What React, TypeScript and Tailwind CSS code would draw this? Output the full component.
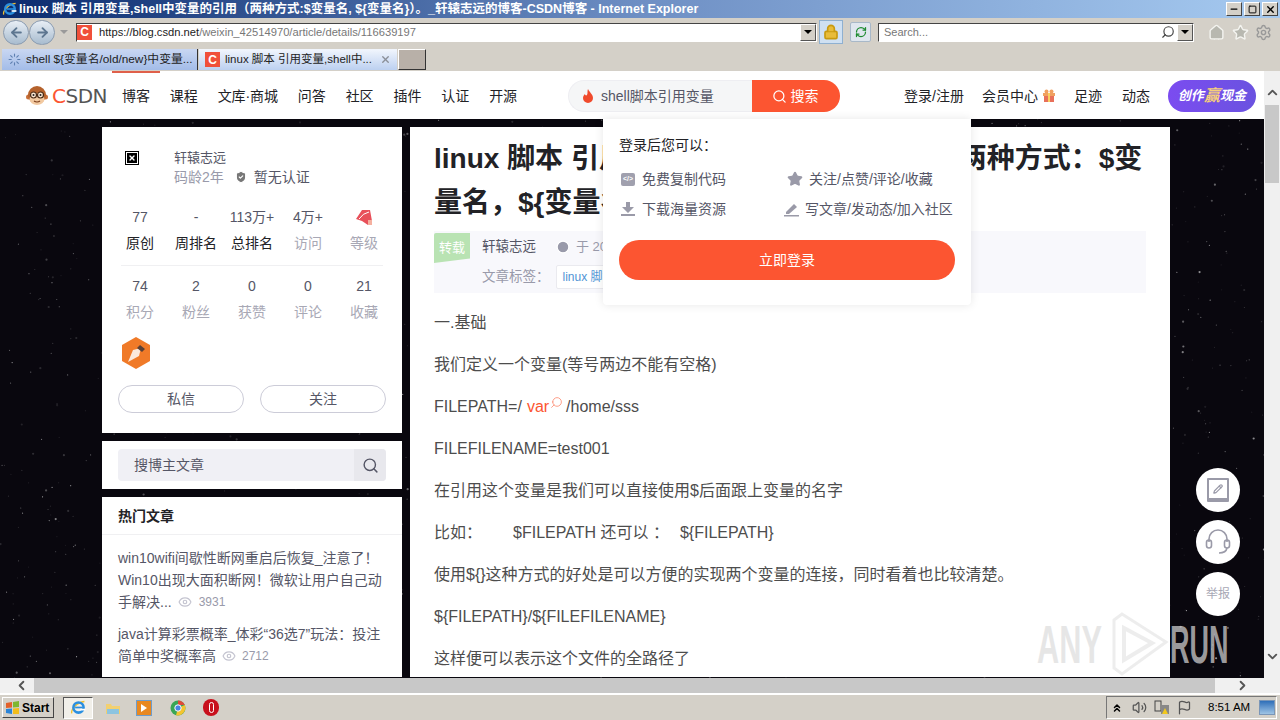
import { ArrowLeft, ArrowRight, ChevronDown, ChevronLeft, ChevronRight, ChevronUp, ChevronsUp, Eye, Home, Lock, Minus, Pencil, RefreshCw, Search, Settings, Star, X, Square, Volume2, Flag, Clock, ShieldCheck, Loader } from 'lucide-react'

const NAV_LEFT = ['博客', '课程', '文库·商城', '问答', '社区', '插件', '认证', '开源']

const STATS = [
  [
    { n: '77', l: '原创', dark: true },
    { n: '-', l: '周排名', dark: true },
    { n: '113万+', l: '总排名', dark: true },
    { n: '4万+', l: '访问', dark: false },
    { n: '', l: '等级', dark: false },
  ],
  [
    { n: '74', l: '积分', dark: false },
    { n: '2', l: '粉丝', dark: false },
    { n: '0', l: '获赞', dark: false },
    { n: '0', l: '评论', dark: false },
    { n: '21', l: '收藏', dark: false },
  ],
]

// 背景星点，固定种子保证每次一样
function makeStars(count: number) {
  const out: { x: number; y: number; r: number; o: number }[] = []
  let s = 1337
  const rnd = () => {
    s = (s * 16807) % 2147483647
    return s / 2147483647
  }
  for (let i = 0; i < count; i++) {
    out.push({ x: rnd() * 1264, y: rnd() * 560, r: rnd() < 0.2 ? 1.1 : 0.6, o: 0.08 + rnd() * rnd() * 0.6 })
  }
  return out
}
const STARS = makeStars(1700)

function CaretButton() {
  return (
    <div className="flex h-[17px] w-[16px] items-center justify-center border border-t-white border-l-white border-r-[#555] border-b-[#555] bg-[#d4d0c8]">
      <div className="h-0 w-0 border-x-[4px] border-t-[4px] border-x-transparent border-t-black" />
    </div>
  )
}

function FaviconC({ size = 19 }: { size?: number }) {
  return (
    <div
      className="flex shrink-0 items-center justify-center bg-[#f0503a] font-bold leading-none text-white"
      style={{ width: size, height: size, fontSize: size - 3 }}
    >
      C
    </div>
  )
}

function IeLogo({ size = 18 }: { size?: number }) {
  return (
    <svg width={size} height={size} viewBox="0 0 20 20">
      <path d="M2 17 C1 12 8 4 17 3" fill="none" stroke="#f0c030" strokeWidth="1.6" />
      <circle cx="10" cy="10" r="6" fill="none" stroke="#2a8fe0" strokeWidth="3" />
      <rect x="6" y="9" width="9" height="2" fill="#2a8fe0" />
      <rect x="12" y="11.5" width="6" height="2" fill="#fff" />
    </svg>
  )
}

function TitleBar() {
  return (
    <div className="flex h-[18px] shrink-0 items-center bg-gradient-to-r from-[#0a2a6e] via-[#6e8fc4] to-[#a6caf0] pr-[2px]">
      <div className="ml-[2px] mr-[1px]">
        <IeLogo size={16} />
      </div>
      <span className="whitespace-nowrap text-[12.5px] font-bold leading-none text-white">
        linux 脚本 引用变量,shell中变量的引用（两种方式:$变量名, ${'{'}变量名{'}'}）。_轩辕志远的博客-CSDN博客 - Internet Explorer
      </span>
      <div className="ml-auto flex gap-[2px]">
        {[
          <Minus key="m" size={10} strokeWidth={3} />,
          <Square key="s" size={9} strokeWidth={2.5} />,
          <X key="x" size={11} strokeWidth={3} />,
        ].map(icon => (
          <div key={icon.key} className="flex h-[14px] w-[16px] items-center justify-center border border-t-white border-l-white border-r-[#444] border-b-[#444] bg-[#d4d0c8] text-black">
            {icon}
          </div>
        ))}
      </div>
    </div>
  )
}

function AddressRow() {
  return (
    <div className="flex h-[30px] shrink-0 items-center bg-[#d4d0c8] pb-[2px] pl-[3px]">
      <div className="flex h-[25px] w-[26px] items-center justify-center rounded-full border border-[#8a9bb0] bg-gradient-to-b from-[#e8eef5] to-[#a8bccf]">
        <ArrowLeft size={15} strokeWidth={3} className="text-[#5d7690]" />
      </div>
      <div className="flex h-[25px] w-[26px] items-center justify-center rounded-full border border-[#8a9bb0] bg-gradient-to-b from-[#e8eef5] to-[#a8bccf]">
        <ArrowRight size={15} strokeWidth={3} className="text-[#5d7690]" />
      </div>
      <div className="ml-[5px] h-0 w-0 border-x-[4px] border-t-[4px] border-x-transparent border-t-[#9a9a9a]" />
      <div className="ml-[8px] flex h-[19px] w-[741px] items-center border border-t-[#444] border-l-[#444] border-r-white border-b-white bg-white">
        <FaviconC size={15} />
        <span className="ml-[7px] text-[11.2px] text-[#777]">
          <span className="text-[#222]">https://</span>
          <span className="text-[#222]">blog.csdn.net</span>/weixin_42514970/article/details/116639197
        </span>
        <div className="ml-auto">
          <CaretButton />
        </div>
      </div>
      <div className="ml-[2px] flex h-[24px] w-[24px] items-center justify-center border border-[#8fb0d0] bg-[#cfe0f2]">
        <Lock size={16} strokeWidth={2.5} className="text-[#c89a10]" fill="#e8bc3a" />
      </div>
      <div className="ml-[7px] flex h-[20px] w-[21px] items-center justify-center rounded-[2px] border border-[#a8b8c8] bg-[#dfe6ee]">
        <RefreshCw size={12} strokeWidth={2.5} className="text-[#1c8a2e]" />
      </div>
      <div className="ml-[7px] flex h-[19px] w-[316px] items-center border border-t-[#444] border-l-[#444] border-r-white border-b-white bg-white">
        <span className="ml-[5px] text-[11px] text-[#777]">Search...</span>
        <Search size={14} strokeWidth={2} className="ml-auto mr-[2px] scale-x-[-1] text-[#444]" />
        <CaretButton />
      </div>
      <Home size={17} strokeWidth={2} className="ml-[14px] text-[#f4f4f0]" fill="#b8b8b0" />
      <Star size={17} strokeWidth={2} className="ml-[7px] text-[#f4f4f0]" fill="#b8b8b0" />
      <Settings size={17} strokeWidth={2} className="ml-[6px] text-[#999]" />
    </div>
  )
}

function TabRow() {
  return (
    <div className="flex h-[23px] shrink-0 items-end bg-[#d4d0c8] pb-[1px] pl-[2px]">
      <div className="flex h-[21px] w-[196px] items-center gap-[5px] border-r border-[#333] bg-gradient-to-b from-[#c9d7f2] to-[#a3bce8] pl-[6px]">
        <Loader size={13} className="text-[#5d7fb0]" />
        <span className="whitespace-nowrap text-[11.8px] text-[#222]">shell ${'{'}变量名/old/new{'}'}中变量...</span>
      </div>
      <div className="ml-[1px] flex h-[21px] w-[198px] items-center gap-[5px] bg-gradient-to-b from-[#f2f6fd] to-[#bcd0f0] pl-[6px]">
        <FaviconC size={15} />
        <span className="whitespace-nowrap text-[11.5px] text-[#222]">linux 脚本 引用变量,shell中...</span>
        <X size={11} strokeWidth={3} className="ml-[3px] text-[#8a8f98]" />
      </div>
      <div className="ml-[1px] h-[21px] w-[28px] border border-t-white border-l-white border-r-[#333] border-b-[#333] bg-[#b8b0a8]" />
    </div>
  )
}

function MonkeyLogo() {
  return (
    <svg width="24" height="24" viewBox="0 0 24 24" className="shrink-0">
      <circle cx="3.5" cy="13" r="2.5" fill="#c9703a" />
      <circle cx="20.5" cy="13" r="2.5" fill="#c9703a" />
      <circle cx="12" cy="11" r="9" fill="#b5622c" />
      <ellipse cx="12" cy="15" rx="7.5" ry="6" fill="#f2c9a0" />
      <circle cx="8.5" cy="11" r="3" fill="#fbe6d0" stroke="#4a2a14" strokeWidth="1.2" />
      <circle cx="15.5" cy="11" r="3" fill="#fbe6d0" stroke="#4a2a14" strokeWidth="1.2" />
      <circle cx="8.5" cy="11" r="1" fill="#222" />
      <circle cx="15.5" cy="11" r="1" fill="#222" />
      <path d="M9 17 Q12 19 15 17" fill="none" stroke="#7a3c18" strokeWidth="1.2" />
    </svg>
  )
}

function TopNav() {
  return (
    <div className="relative flex h-[48px] shrink-0 items-center bg-white pl-[25px] pt-[2px] text-[14px] text-[#222226]">
      <div className="absolute left-[112px] top-0 h-[2px] w-[48px] bg-[#e0604a]" />
      <MonkeyLogo />
      <span className="ml-[3px] w-[52px] whitespace-nowrap font-['DejaVu_Sans',sans-serif] text-[20px] leading-none tracking-[-0.5px]">
        <span className="text-[#fc5531]">C</span>
        <span className="text-[#555]">SDN</span>
      </span>
      <div className="ml-[18px] flex w-[395px] justify-between">
        {NAV_LEFT.map(t => (
          <span key={t} className="whitespace-nowrap tracking-[-0.1px]">{t}</span>
        ))}
      </div>
      <div className="ml-[51px] flex h-[32px] w-[272px]">
        <div className="flex w-[184px] items-center rounded-l-[16px] border border-r-0 border-[#eeeef2] bg-[#f5f6f7] pl-[13px] text-[#555666]">
          <svg width="12" height="14" viewBox="0 0 12 14" className="mr-[7px]">
            <path d="M6 0 C7 3 11 5 11 9 A5 5 0 0 1 1 9 C1 7 2 6 3 5 C3 6 4 7 5 6 C6 4 5 2 6 0Z" fill="#f04a2c" />
          </svg>
          shell脚本引用变量
        </div>
        <div className="flex flex-1 items-center justify-center gap-[4px] rounded-r-[16px] bg-[#fc5531] pr-[2px] text-white">
          <Search size={15} />
          搜索
        </div>
      </div>
      <div className="ml-[64px] flex items-center whitespace-nowrap">
        <span>登录/注册</span>
        <span className="ml-[18px]">会员中心</span>
        <svg width="14" height="14" viewBox="0 0 14 14" className="ml-[4px]">
          <rect x="1" y="4" width="12" height="3" fill="#f0a060" />
          <rect x="2" y="7" width="10" height="6" fill="#e8705a" />
          <rect x="6" y="4" width="2" height="9" fill="#f8d060" />
          <circle cx="4.5" cy="2.5" r="2" fill="#f0a060" />
          <circle cx="9.5" cy="2.5" r="2" fill="#f0a060" />
        </svg>
        <span className="ml-[18px]">足迹</span>
        <span className="ml-5">动态</span>
        <div className="ml-[18px] flex h-[32px] w-[88px] items-center justify-center rounded-[16px] bg-gradient-to-r from-[#7b4cf0] to-[#6a52e0] text-[13px] font-bold italic text-white">
          创作<span className="text-[16px] text-[#f7cf7a]">赢</span>现金
        </div>
      </div>
    </div>
  )
}

function StatRow({ row }: { row: (typeof STATS)[number] }) {
  return (
    <div className="-mx-[6px] grid grid-cols-5">
      {row.map(c => (
        <div key={c.l} className="flex flex-col items-center">
          <div className="flex h-[22px] items-center whitespace-nowrap text-[14px] text-[#555666]">
            {c.n || (
              <svg width="19" height="17" viewBox="0 0 19 17">
                <path d="M1 10 L7 1 L15 1 L17 12 L13 12 L13 16 L7 12Z" fill="#e8505a" />
                <path d="M4 10 Q8 4 14 3" stroke="#fff" strokeWidth="1" fill="none" />
                <rect x="13" y="11" width="4" height="5" fill="#f5b0a0" />
              </svg>
            )}
          </div>
          <div className={`mt-[4px] text-[14px] leading-[22px] ${c.dark ? 'text-[#222226]' : 'text-[#a8a8b5]'}`}>{c.l}</div>
        </div>
      ))}
    </div>
  )
}

function ProfileCard() {
  return (
    <div className="h-[306px] bg-white px-4 pt-[22px]">
      <div className="flex">
        <div className="ml-[7px] mt-[2px] flex h-[14px] w-[14px] items-center justify-center border border-black bg-white p-[1px]">
          <div className="flex h-full w-full items-center justify-center bg-black">
            <X size={8} strokeWidth={4} className="text-white" />
          </div>
        </div>
        <div className="ml-[35px]">
          <div className="text-[13px] leading-[18px] text-[#555666]">轩辕志远</div>
          <div className="flex items-center text-[14px] leading-[20px]">
            <span className="text-[#999aaa]">码龄2年</span>
            <ShieldCheck size={14} className="ml-[10px] text-white" fill="#777" />
            <span className="ml-[6px] text-[#555666]">暂无认证</span>
          </div>
        </div>
      </div>
      <div className="mt-[19px]">
        <StatRow row={STATS[0]} />
      </div>
      <div className="mx-[3px] mt-[11px] h-px bg-[#f0f0f2]" />
      <div className="mt-[9px]">
        <StatRow row={STATS[1]} />
      </div>
      <svg width="30" height="32" viewBox="0 0 30 32" className="ml-[3px] mt-[14px] block">
        <path d="M15 0 L29 8 L29 24 L15 32 L1 24 L1 8Z" fill="#f07a28" />
        <path d="M7 25 L12 13 L20 11 L18 19Z" fill="#fbe9dc" />
        <path d="M19 8 L24 12 L21 15 L16 11Z" fill="#5a4036" />
      </svg>
      <div className="mt-[16px] flex justify-between text-[14px] text-[#555666]">
        <div className="flex h-[28px] w-[126px] items-center justify-center rounded-[14px] border border-[#ccccd8]">私信</div>
        <div className="flex h-[28px] w-[126px] items-center justify-center rounded-[14px] border border-[#ccccd8]">关注</div>
      </div>
    </div>
  )
}

function HotCard() {
  return (
    <div className="flex-1 bg-white">
      <div className="flex h-[38px] items-center border-b border-[#f0f0f2] px-4 pt-[1px] text-[14px] font-bold text-[#222226]">热门文章</div>
      <div className="px-4 pt-[12px] text-[14px] leading-[22px] text-[#555666]">
        <div className="whitespace-nowrap">win10wifi间歇性断网重启后恢复_注意了！</div>
        <div className="whitespace-nowrap">Win10出现大面积断网！微软让用户自己动</div>
        <div className="mb-[10px] flex items-center">
          手解决...
          <Eye size={14} className="ml-[6px] mr-[7px] text-[#c4c4d0]" />
          <span className="text-[12px] text-[#999aaa]">3931</span>
        </div>
        <div className="whitespace-nowrap">java计算彩票概率_体彩“36选7”玩法：投注</div>
        <div className="flex items-center">
          简单中奖概率高
          <Eye size={14} className="ml-[6px] mr-[6px] text-[#c4c4d0]" />
          <span className="text-[12px] text-[#999aaa]">2712</span>
        </div>
      </div>
    </div>
  )
}

function Sidebar() {
  return (
    <div className="flex h-[550px] w-[300px] shrink-0 flex-col gap-2">
      <ProfileCard />
      <div className="h-[48px] bg-white px-4 pt-2">
        <div className="flex h-[32px] items-center overflow-hidden rounded-[4px] bg-[#f0f0f5] pl-4 text-[14px] text-[#555666]">
          搜博主文章
          <div className="ml-auto flex h-full w-[32px] items-center justify-center bg-[#e8e8ed]">
            <Search size={17} className="text-[#555666]" />
          </div>
        </div>
      </div>
      <HotCard />
    </div>
  )
}

function Article() {
  return (
    <div className="h-[550px] w-[760px] shrink-0 overflow-hidden bg-white px-6 pt-[10px]">
      <h1 className="text-[28px] font-bold leading-[44px] text-[#222226]">
        linux 脚本 引用<span className="tracking-[0.55px]">变量,shell中变量的引用（</span>两种方式：$变<br />
        量名，${'{'}变量名{'}'}）
      </h1>
      <div className="mt-[6px] h-[62px] w-[712px] bg-[#f8f8fc] pt-[2px] text-[13px] text-[#555666]">
        <div className="flex">
          <div className="flex h-[30px] w-[36px] items-center justify-center rounded-tl-[2px] bg-[#b9e3b3] text-[13px] text-white [clip-path:polygon(0_0,100%_0,100%_85%,0_100%)]">转载</div>
          <span className="ml-[12px] mt-[5px] text-[13.5px] leading-[18px]">轩辕志远</span>
          <Clock size={14} className="ml-[20px] mt-[7px] text-white" fill="#999aaa" />
          <span className="ml-[6px] mt-[5px] leading-[18px] text-[#999aaa]">于 2021-05-12 发布</span>
        </div>
        <div className="ml-[48px] mt-[2px] flex items-center">
          <span className="text-[13.5px] text-[#999aaa]">文章标签：</span>
          <span className="ml-[6px] rounded-[2px] border border-[#eaeaef] bg-white px-[6px] text-[12px] leading-[22px] text-[#5094d5]">linux 脚本</span>
        </div>
      </div>
      <div className="mt-[17px] text-[16px] leading-[26px] text-[#4d4d4d] [&>p]:mb-4">
        <p>一.基础</p>
        <p>我们定义一个变量(等号两边不能有空格)</p>
        <p className="h-[26px]">
          FILEPATH=/
          <span className="ml-[5px] text-[#fc5531]">var</span>
          <Search size={13} strokeWidth={1.5} className="relative top-[-5px] ml-[1px] inline scale-x-[-1] text-[#fc8a70]" />
          <span className="ml-[3px]">/home/sss</span>
        </p>
        <p>FILEFILENAME=test001</p>
        <p>在引用这个变量是我们可以直接使用$后面跟上变量的名字</p>
        <p className="whitespace-nowrap">
          比如：<span className="ml-[31px]">$FILEPATH 还可以 ：</span>
          <span className="ml-[11px]">${'{'}FILEPATH{'}'}</span>
        </p>
        <p>使用${'{'}{'}'}这种方式的好处是可以方便的实现两个变量的连接，同时看着也比较清楚。</p>
        <p>${'{'}FILEPATH{'}'}/${'{'}FILEFILENAME{'}'}</p>
        <p>这样便可以表示这个文件的全路径了</p>
      </div>
    </div>
  )
}

function LoginPopup() {
  return (
    <div className="absolute left-[603px] top-[48px] h-[186px] w-[368px] rounded-b-[4px] bg-white px-4 pt-[16px] text-[14px] text-[#555666] shadow-[0_0_10px_rgba(0,0,0,0.1)]">
      <div className="leading-[20px] text-[#222226]">登录后您可以：</div>
      <div className="mt-[14px] grid grid-cols-[165px_1fr] gap-y-[10px] leading-[20px]">
        <div className="flex items-center">
          <div className="ml-[2px] flex h-[13px] w-[14px] items-center justify-center rounded-[2px] bg-[#a0a0ae] text-[7px] font-bold text-white">&lt;/&gt;</div>
          <span className="ml-[7px]">免费复制代码</span>
        </div>
        <div className="flex items-center">
          <Star size={16} className="ml-[3px] text-[#9a9aa8]" fill="#9a9aa8" />
          <span className="ml-[6px]">关注/点赞/评论/收藏</span>
        </div>
        <div className="flex items-center">
          <svg width="14" height="14" viewBox="0 0 14 14" className="ml-[2px]">
            <path d="M5 0 H9 V5 H13 L7 11 L1 5 H5Z" fill="#9a9aa8" />
            <rect x="0" y="12" width="14" height="2" fill="#9a9aa8" />
          </svg>
          <span className="ml-[7px]">下载海量资源</span>
        </div>
        <div className="flex items-center">
          <svg width="15" height="15" viewBox="0 0 15 15">
            <path d="M2 10 L10 2 L13 5 L5 12 L2 12Z" fill="#9a9aa8" />
            <rect x="0" y="13" width="15" height="1.5" fill="#9a9aa8" />
          </svg>
          <span className="ml-[6px]">写文章/发动态/加入社区</span>
        </div>
      </div>
      <div className="mt-[21px] flex h-[40px] items-center justify-center rounded-[20px] bg-[#fc5531] text-white">立即登录</div>
    </div>
  )
}

function FloatButtons() {
  return (
    <div className="absolute left-[1196px] top-[397px] flex flex-col gap-2">
      <div className="flex h-[44px] w-[44px] items-center justify-center rounded-full bg-white">
        <div className="flex h-[24px] w-[22px] items-center justify-center rounded-[1px] border-2 border-b-[4px] border-[#9a9aa8]">
          <Pencil size={10} strokeWidth={3} className="text-[#9a9aa8]" />
        </div>
      </div>
      <div className="flex h-[44px] w-[44px] items-center justify-center rounded-full bg-white">
        <svg width="26" height="26" viewBox="0 0 26 26" fill="none" stroke="#9a9aa8" strokeWidth="1.6">
          <path d="M4 13 V10 A9 9 0 0 1 22 10 V13" />
          <rect x="1.5" y="11" width="5" height="8" rx="2.5" />
          <rect x="19.5" y="11" width="5" height="8" rx="2.5" />
          <path d="M22 19 Q21 24 14 24" />
        </svg>
      </div>
      <div className="flex h-[44px] w-[44px] items-center justify-center rounded-full bg-white text-[12px] text-[#a8a8b5]">举报</div>
    </div>
  )
}

function Watermark() {
  return (
    <div className="pointer-events-none absolute left-[1037px] top-[537px] flex items-center font-['Liberation_Sans',sans-serif] font-bold text-[#dcdcdc]/70">
      <span className="w-[66px] origin-left scale-x-[0.58] whitespace-nowrap text-[53px] leading-none">ANY</span>
      <svg width="62" height="72" viewBox="0 0 62 72" className="ml-[5px]" fill="none" stroke="#e6e6e6" strokeOpacity="0.7">
        <path d="M6 12 L14 6 L58 34 L14 66 L6 60Z" strokeWidth="3" />
        <path d="M16 20 L44 35 L16 52Z" strokeWidth="4" />
      </svg>
      <span className="w-[60px] origin-left scale-x-[0.51] whitespace-nowrap text-[53px] leading-none">RUN</span>
    </div>
  )
}

function VScrollbar() {
  return (
    <div className="flex w-[16px] shrink-0 flex-col items-center bg-[#f0f0f0]">
      <ChevronUp size={15} strokeWidth={3} className="mt-[14px] text-[#555]" />
      <div className="mt-[5px] h-[78px] w-[14px] bg-[#c8c8c8]" />
      <ChevronDown size={15} strokeWidth={3} className="mb-[14px] mt-auto text-[#555]" />
    </div>
  )
}

function HScrollbar() {
  return (
    <div className="flex h-[15px] shrink-0 items-center bg-[#f0f0f0]">
      <ChevronLeft size={15} strokeWidth={3} className="ml-[14px] text-[#555]" />
      <div className="ml-[5px] h-full w-[1181px] bg-[#c8c8c8]" />
      <ChevronRight size={15} strokeWidth={3} className="ml-[20px] text-[#555]" />
    </div>
  )
}

function Taskbar() {
  return (
    <div className="flex h-[27px] shrink-0 items-center border-t-2 border-white bg-[#d4d0c8] pl-[2px]">
      <div className="flex h-[21px] w-[52px] items-center border border-t-white border-l-white border-r-[#444] border-b-[#444] pl-[2px] text-[12px] font-bold leading-none text-black">
        <svg width="15" height="14" viewBox="0 0 15 14" className="mr-[2px]">
          <path d="M1 2 L7 1 L7 6.5 L1 7Z" fill="#e2602a" />
          <path d="M8 1 L14 0 L14 6 L8 6.5Z" fill="#7db72f" />
          <path d="M1 8 L7 7.5 L7 13 L1 12Z" fill="#2a84d8" />
          <path d="M8 7.5 L14 7 L14 13 L8 13Z" fill="#f2bd1c" />
        </svg>
        Start
      </div>
      <div className="ml-[9px] flex h-[22px] w-[30px] items-center justify-center border border-t-[#555] border-l-[#555] border-r-white border-b-white bg-[#f1efe9]">
        <IeLogo size={17} />
      </div>
      <svg width="16" height="16" viewBox="0 0 16 16" className="ml-[12px]">
        <path d="M1 4 L6 4 L7 6 L15 6 L15 14 L1 14Z" fill="#f2d070" />
        <rect x="2" y="9" width="12" height="5" fill="#8cc4e0" />
      </svg>
      <div className="ml-[15px] flex h-[16px] w-[16px] items-center justify-center border border-[#6d9ccc] bg-[#e88820]">
        <div className="h-0 w-0 border-y-[4px] border-l-[6px] border-y-transparent border-l-white" />
      </div>
      <svg width="16" height="16" viewBox="0 0 16 16" className="ml-[18px]">
        <circle cx="8" cy="8" r="7.5" fill="#3aa655" />
        <path d="M8 .5 A7.5 7.5 0 0 1 14.8 5 L8 5Z" fill="#e04a38" />
        <path d="M14.8 5 A7.5 7.5 0 0 1 6 15.2 L8 8Z" fill="#f4c430" />
        <circle cx="8" cy="8" r="3.2" fill="#4a84e0" stroke="#fff" />
      </svg>
      <div className="ml-[17px] flex h-[17px] w-[16px] items-center justify-center rounded-full bg-[#c8101c]">
        <div className="h-[11px] w-[5px] rounded-full border border-white" />
      </div>
      <div className="ml-auto mr-[3px] flex h-[23px] w-[171px] items-center border border-t-[#777] border-l-[#777] border-r-white border-b-white pl-[4px] text-black">
        <ChevronsUp size={12} strokeWidth={3} />
        <Volume2 size={15} className="ml-[9px] text-[#555]" />
        <svg width="16" height="16" viewBox="0 0 16 16" className="ml-[7px]">
          <rect x="1" y="1" width="6" height="10" fill="none" stroke="#444" />
          <rect x="7" y="5" width="8" height="9" fill="#888" />
          <path d="M11 8 L14 14 L8 14Z" fill="#f2c81c" />
        </svg>
        <Flag size={15} className="ml-[7px] text-[#555]" />
        <span className="ml-[16px] whitespace-nowrap text-[11.5px]">8:51 AM</span>
        <div className="ml-auto mr-[1px] h-[15px] w-[16px] border border-[#7a96b8] bg-gradient-to-b from-[#2e6fb8] to-[#9fc4e4]" />
      </div>
    </div>
  )
}

export default function App() {
  return (
    <div className="flex h-[720px] w-[1280px] flex-col overflow-hidden bg-[#d4d0c8] font-['Liberation_Sans','Noto_Sans_CJK_SC',sans-serif]">
      <TitleBar />
      <AddressRow />
      <TabRow />
      <div className="flex min-h-0 flex-1">
        <div className="relative flex min-w-0 flex-1 flex-col overflow-hidden">
          <TopNav />
          <div className="relative flex-1 bg-[#09070e]">
            <svg className="absolute inset-0" width="1264" height="560">
              {STARS.map((st, i) => (
                <circle key={i} cx={st.x} cy={st.y} r={st.r} fill="#fff" opacity={st.o} />
              ))}
            </svg>
            <div className="relative flex gap-2 pl-[102px] pt-2">
              <Sidebar />
              <Article />
            </div>
          </div>
          <LoginPopup />
          <FloatButtons />
          <Watermark />
        </div>
        <VScrollbar />
      </div>
      <HScrollbar />
      <Taskbar />
    </div>
  )
}
